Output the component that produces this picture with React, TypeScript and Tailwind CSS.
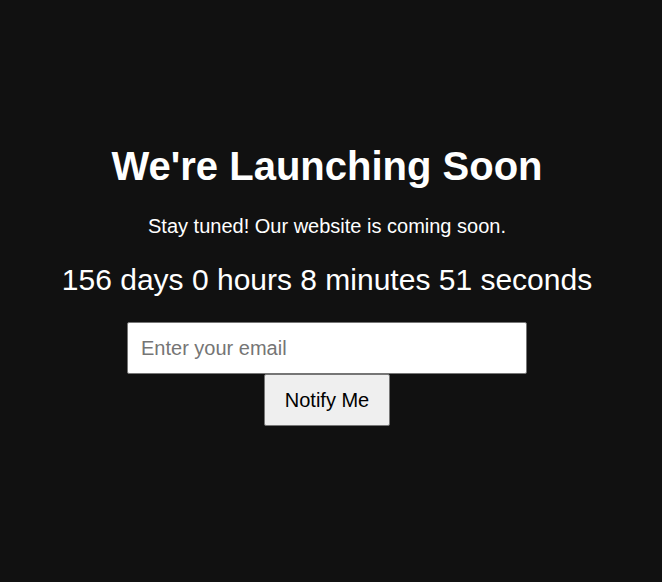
export default function App() {
  return (
    <div className="min-h-screen bg-[#111111] text-white font-['Liberation_Sans',Arial,sans-serif] flex flex-col items-center pt-[143px] pr-2">
      <h1 className="text-[40px] leading-[46px] font-bold">We&apos;re Launching Soon</h1>
      <p className="mt-[26px] text-[20px] leading-[23px]">Stay tuned! Our website is coming soon.</p>
      <div className="mt-[24px] text-[30px] leading-[35px]">156 days 0 hours 8 minutes 51 seconds</div>
      <form className="mt-[25px] flex flex-col items-center" onSubmit={(e) => e.preventDefault()}>
        <input
          type="email"
          placeholder="Enter your email"
          className="w-[400px] h-[52px] pl-[13px] pr-3 text-[20px] text-black bg-white border border-[#767676] rounded-[2px] placeholder:text-[#757575] outline-none"
        />
        <button
          type="submit"
          className="h-[52px] px-5 text-[20px] text-black bg-[#efefef] border border-[#767676] rounded-[2px]"
        >
          Notify Me
        </button>
      </form>
    </div>
  )
}
